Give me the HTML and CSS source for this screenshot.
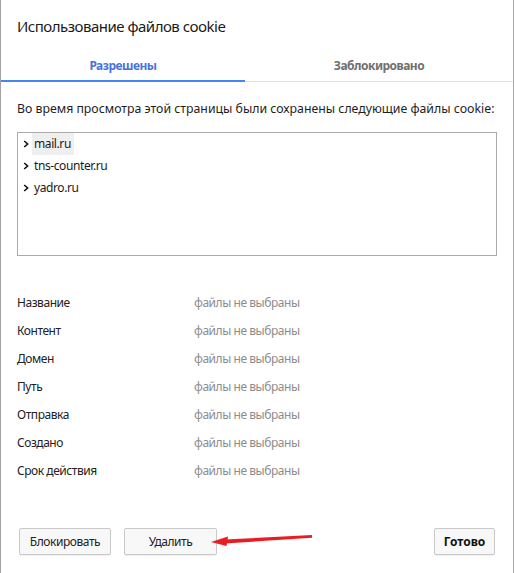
FILE: index.html
```html
<!DOCTYPE html>
<html lang="ru">
<head>
<meta charset="utf-8">
<title>Использование файлов cookie</title>
<link rel="stylesheet" href="styles.css">
</head>
<body>
<div class="dialog">
  <div class="title">Использование файлов cookie</div>
  <div class="tabs">
    <div class="tab tab-active">Разрешены</div>
    <div class="tab tab-rest">Заблокировано</div>
  </div>
  <div class="content">
    <p class="desc">Во время просмотра этой страницы были сохранены следующие файлы cookie:</p>
    <div class="tree">
      <div class="tree-row">
        <svg class="chev" width="6" height="8" viewBox="0 0 6 8"><path d="M1.2 1 L4.6 4 L1.2 7" fill="none" stroke="#111" stroke-width="1.6"/></svg>
        <span class="tree-label tree-selected">mail.ru</span>
      </div>
      <div class="tree-row">
        <svg class="chev" width="6" height="8" viewBox="0 0 6 8"><path d="M1.2 1 L4.6 4 L1.2 7" fill="none" stroke="#111" stroke-width="1.6"/></svg>
        <span class="tree-label">tns-counter.ru</span>
      </div>
      <div class="tree-row">
        <svg class="chev" width="6" height="8" viewBox="0 0 6 8"><path d="M1.2 1 L4.6 4 L1.2 7" fill="none" stroke="#111" stroke-width="1.6"/></svg>
        <span class="tree-label">yadro.ru</span>
      </div>
    </div>
    <div class="props">
      <div class="prop"><span class="prop-name">Название</span><span class="prop-value">файлы не выбраны</span></div>
      <div class="prop"><span class="prop-name">Контент</span><span class="prop-value">файлы не выбраны</span></div>
      <div class="prop"><span class="prop-name">Домен</span><span class="prop-value">файлы не выбраны</span></div>
      <div class="prop"><span class="prop-name">Путь</span><span class="prop-value">файлы не выбраны</span></div>
      <div class="prop"><span class="prop-name">Отправка</span><span class="prop-value">файлы не выбраны</span></div>
      <div class="prop"><span class="prop-name">Создано</span><span class="prop-value">файлы не выбраны</span></div>
      <div class="prop"><span class="prop-name">Срок действия</span><span class="prop-value">файлы не выбраны</span></div>
    </div>
  </div>
  <div class="footer">
    <button class="btn btn-block">Блокировать</button>
    <button class="btn btn-delete">Удалить</button>
    <span class="spacer"></span>
    <button class="btn btn-done">Готово</button>
  </div>
  <svg class="arrow" width="514" height="573" viewBox="0 0 514 573">
    <polygon points="225,539.6 312,535 312,537.8 225,543.4" fill="#ea1c22"/>
    <polygon points="211,542 228,536.4 226.5,546" fill="#ea1c22"/>
  </svg>
</div>
</body>
</html>
```

FILE: styles.css
```css
html, body {
  margin: 0;
  padding: 0;
  background: #ffffff;
}

body {
  font-family: "Noto Sans", "Open Sans", sans-serif;
  font-size: 12px;
  color: #1e1e1e;
}

.dialog {
  position: relative;
  width: 514px;
  height: 573px;
  box-sizing: border-box;
  border-left: 1px solid #a3a3a3;
  border-right: 1px solid #a8a8a8;
  background: #fff;
  display: flex;
  flex-direction: column;
  overflow: hidden;
}

.title {
  padding: 16px 0 0 16px;
  font-size: 15px;
  line-height: 20px;
  letter-spacing: -0.5px;
  color: #1a1a1a;
}

.tabs {
  margin-top: 12px;
  display: flex;
  height: 34px;
  box-sizing: border-box;
  border-bottom: 1px solid #e2e2e2;
}

.tab {
  box-sizing: border-box;
  height: 33px;
  padding-top: 10px;
  line-height: 16px;
  text-align: center;
  font-weight: bold;
  font-size: 12px;
  letter-spacing: -0.5px;
  color: #707070;
}

.tab-active {
  width: 244px;
  color: #4a72dc;
  border-bottom: 2px solid #4285f4;
  height: 34px;
}

.tab-rest {
  flex: 1;
}

.content {
  padding: 0 16px;
}

.desc {
  margin: 19px 0 0 0;
  font-size: 12.3px;
  line-height: 16px;
  color: #1e1e1e;
}

.tree {
  margin-top: 15px;
  height: 124px;
  box-sizing: border-box;
  border: 1px solid #ababab;
  padding-left: 4px;
}

.tree-row {
  height: 22px;
  display: flex;
  align-items: center;
}

.chev {
  margin-left: 1px;
  margin-right: 5px;
  flex: none;
}

.tree-label {
  font-size: 12px;
  letter-spacing: -0.4px;
  line-height: 22px;
  padding: 0 3px 0 2px;
  margin-left: -2px;
  color: #1a1a1a;
}

.tree-selected {
  background: #efefef;
}

.props {
  margin-top: 33px;
}

.prop {
  display: flex;
  height: 28px;
  line-height: 28px;
  letter-spacing: -0.45px;
}

.prop-name {
  width: 177px;
  color: #222;
}

.prop-value {
  color: #8d8d8d;
}

.footer {
  margin-top: auto;
  margin-bottom: 18px;
  padding: 0 18px;
  display: flex;
  align-items: center;
  gap: 13px;
}

.spacer {
  flex: 1;
}

.btn {
  height: 27px;
  box-sizing: border-box;
  border: 1px solid #c9c9c9;
  border-radius: 2px;
  background: #f8f8f8;
  box-shadow: 0 1px 0 rgba(0, 0, 0, 0.06);
  font-family: "Noto Sans", "Open Sans", sans-serif;
  font-size: 12px;
  letter-spacing: -0.45px;
  color: #222;
  padding: 0;
  margin: 0;
}

.btn-block { width: 92px; }
.btn-delete { width: 93px; }
.btn-done { width: 61px; font-weight: bold; color: #111; letter-spacing: 0; }

.arrow {
  position: absolute;
  left: -1px;
  top: 0;
  pointer-events: none;
}
```
